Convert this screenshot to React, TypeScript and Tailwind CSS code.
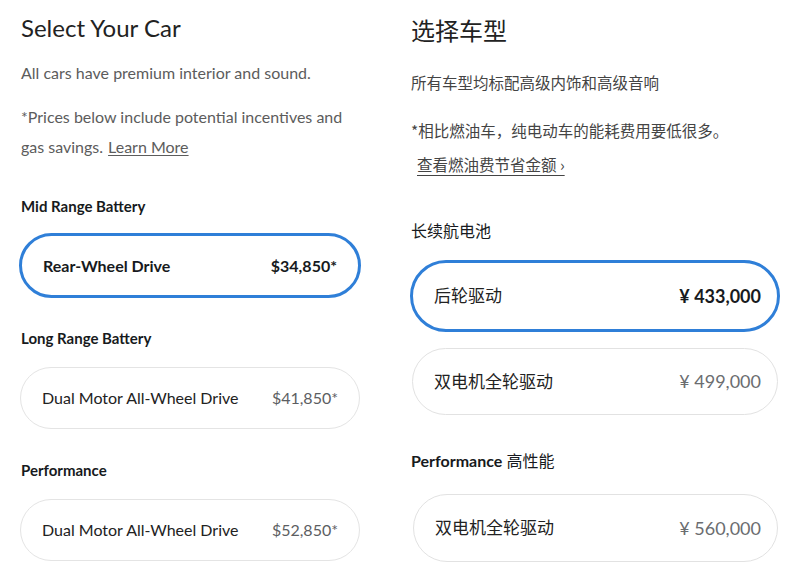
const latin = "font-['Lato','Noto_Sans_CJK_SC',sans-serif]";

type Option = { name: string; price: string; selected?: boolean };

function EnCard({ opt, className }: { opt: Option; className: string }) {
  return (
    <div
      className={`flex items-center justify-between rounded-full bg-white pl-[21px] pr-[21px] ${className} ${
        opt.selected ? "border-[3px] border-[#2f7fd8]" : "border border-[#e4e4e4]"
      }`}
    >
      <span className={`text-[16px] ${opt.selected ? "font-bold text-[#171a20]" : "text-[#222]"}`}>{opt.name}</span>
      <span className={`text-[16px] ${opt.selected ? "font-bold text-[#171a20]" : "text-[#5c5e62]"}`}>{opt.price}</span>
    </div>
  );
}

function CnCard({ opt, className }: { opt: Option; className: string }) {
  return (
    <div
      className={`flex items-center justify-between rounded-full bg-white pl-[21px] pr-[16px] ${className} ${
        opt.selected ? "border-[3px] border-[#2f7fd8]" : "border border-[#e2e2e2]"
      }`}
    >
      <span className="text-[17px] text-[#222]">{opt.name}</span>
      <span className={`text-[18px] ${opt.selected ? "font-bold text-[#171a20]" : "text-[#6b6d70]"}`}>{opt.price}</span>
    </div>
  );
}

export default function App() {
  return (
    <div className={`flex h-[574px] w-[800px] overflow-hidden bg-white ${latin}`}>
      {/* English version */}
      <div className="flex w-[395px] flex-col pl-[19px]">
        <h1 className="pl-[2px] text-[24px] font-normal leading-[56px] text-[#222]">Select Your Car</h1>
        <p className="mt-[3px] pl-[2px] text-[16px] leading-[28px] text-[#5c5c5c]">
          All cars have premium interior and sound.
        </p>
        <div className="mt-[15px] pl-[2px] text-[16px] leading-[30px] text-[#5c5c5c]">
          <p>*Prices below include potential incentives and</p>
          <div className="flex gap-[5px]">
            <span>gas savings.</span>
            <span className="underline underline-offset-2">Learn More</span>
          </div>
        </div>
        <h2 className="mt-[32px] pl-[2px] text-[15px] font-bold leading-[24px] text-[#171a20]">Mid Range Battery</h2>
        <EnCard className="mt-[15px] h-[65px] w-[342px]" opt={{ name: "Rear-Wheel Drive", price: "$34,850*", selected: true }} />
        <h2 className="mt-[28px] pl-[2px] text-[15px] font-bold leading-[24px] text-[#171a20]">Long Range Battery</h2>
        <EnCard className="ml-[1px] mt-[17px] h-[62px] w-[340px]" opt={{ name: "Dual Motor All-Wheel Drive", price: "$41,850*" }} />
        <h2 className="mt-[29px] pl-[2px] text-[15px] font-bold leading-[24px] text-[#171a20]">Performance</h2>
        <EnCard className="ml-[1px] mt-[17px] h-[62px] w-[340px]" opt={{ name: "Dual Motor All-Wheel Drive", price: "$52,850*" }} />
      </div>

      {/* Chinese version */}
      <div className="flex w-[405px] flex-col pl-[15px]">
        <h1 className="mt-[2px] pl-[1px] font-['Noto_Sans_CJK_SC',serif] text-[24px] font-normal leading-[56px] text-[#222]">
          选择车型
        </h1>
        <p className="mt-[12px] pl-[1px] font-['Noto_Sans_CJK_SC',sans-serif] text-[15.5px] leading-[24px] text-[#444]">
          所有车型均标配高级内饰和高级音响
        </p>
        <div className="mt-[19px] pl-[1px] font-['Noto_Sans_CJK_SC',sans-serif] text-[15.5px] leading-[34px] text-[#444]">
          <p>*相比燃油车，纯电动车的能耗费用要低很多。</p>
          <p className="pl-[6px]">
            <span className="underline underline-offset-4">查看燃油费节省金额 ›</span>
          </p>
        </div>
        <h2 className="mt-[37px] pl-[1px] font-['Noto_Sans_CJK_SC',sans-serif] text-[16px] leading-[24px] text-[#171a20]">
          长续航电池
        </h2>
        <CnCard className="mt-[18px] h-[72px] w-[370px]" opt={{ name: "后轮驱动", price: "¥ 433,000", selected: true }} />
        <CnCard className="ml-[2px] mt-[16px] h-[67px] w-[366px]" opt={{ name: "双电机全轮驱动", price: "¥ 499,000" }} />
        <h2 className="mt-[34px] pl-[1px] text-[16px] leading-[24px] text-[#171a20]">
          <span className="font-bold">Performance</span> 高性能
        </h2>
        <CnCard className="ml-[3px] mt-[21px] h-[68px] w-[365px]" opt={{ name: "双电机全轮驱动", price: "¥ 560,000" }} />
      </div>
    </div>
  );
}
